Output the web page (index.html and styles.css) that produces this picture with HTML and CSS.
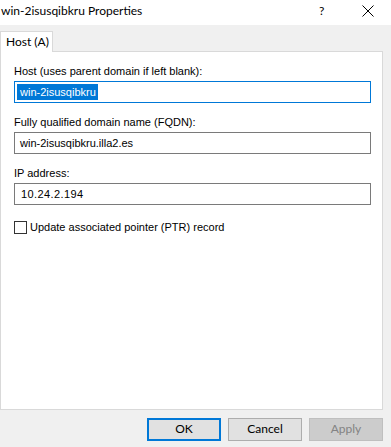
FILE: index.html
```html
<!DOCTYPE html>
<html>
<head>
    <meta charset='utf-8' />
    <title>win-2isusqibkru Properties</title>
    <link rel="stylesheet" href="styles.css">
</head>
<body>
    <div class='dialog'>
        <div class='titlebar'>
            <span class='title'>win-2isusqibkru Properties</span>
            <span class='help'>?</span>
            <span class='close'>
                <svg width='12' height='12' viewBox='0 0 12 12'><path d='M0.5 0.5 L11.5 11.5 M11.5 0.5 L0.5 11.5' stroke='#000' stroke-width='1' fill='none'/></svg>
            </span>
        </div>

        <div class='tabs'>
            <div class='tab'>Host (A)</div>
        </div>

        <div class='panel'>
            <div class='field'>
                <div class='label'>Host (uses parent domain if left blank):</div>
                <div class='input focused'><span class='selected'>win-2isusqibkru</span></div>
            </div>
            <div class='field'>
                <div class='label'>Fully qualified domain name (FQDN):</div>
                <div class='input'>win-2isusqibkru.illa2.es</div>
            </div>
            <div class='field'>
                <div class='label'>IP address:</div>
                <div class='input ip'>10.24.2.194</div>
            </div>
            <label class='check'><span class='box'></span>Update associated pointer (PTR) record</label>
        </div>

        <div class='buttons'>
            <div class='btn default'>OK</div>
            <div class='btn'>Cancel</div>
            <div class='btn disabled'>Apply</div>
        </div>
    </div>
</body>
</html>
```

FILE: styles.css
```css
body {
    margin: 0;
    background: #f0f0f0;
    font-family: 'Lato', 'Noto Sans', sans-serif;
    font-size: 12px;
    color: #000;
}

.dialog {
    width: 391px;
    height: 447px;
}

.titlebar {
    height: 25px;
    background: #fff;
    display: flex;
    align-items: center;
    line-height: 16px;
}

.titlebar .title {
    flex: 1;
    padding: 0 0 0 1px;
    margin-top: -3px;
}

.titlebar .help {
    width: 10px;
    margin: -3px 33px 0 0;
}

.titlebar .close {
    width: 12px;
    height: 12px;
    margin: -4px 17px 0 0;
}

.titlebar .close svg {
    display: block;
}

.tabs {
    padding: 6px 0 0 0;
    display: flex;
}

.tab {
    width: 53px;
    height: 21px;
    box-sizing: border-box;
    border: 1px solid #d9d9d9;
    border-bottom: none;
    background: #fff;
    padding: 0 0 0 5px;
    line-height: 19px;
    margin-bottom: -1px;
    position: relative;
    z-index: 1;
}

.panel {
    width: 383px;
    height: 359px;
    box-sizing: border-box;
    border: 1px solid #d9d9d9;
    background: #fff;
    padding: 11px 0 0 13px;
    font-family: 'Liberation Sans', Arial, sans-serif;
    font-size: 11px;
}

.field {
    margin: 0 0 11px 0;
}

.label {
    line-height: 16px;
    margin: 0 0 2px 0;
}

.input {
    width: 357px;
    height: 22px;
    box-sizing: border-box;
    border: 1px solid #7a7a7a;
    padding: 0 0 0 5px;
    line-height: 20px;
}

.input.focused {
    border-color: #0078d7;
    padding-left: 2px;
}

.input.ip {
    padding-left: 6px;
    letter-spacing: 0.4px;
}

.selected {
    background: #0078d7;
    color: #fff;
    padding: 2px 2px 2px 3px;
}

.check {
    display: flex;
    align-items: center;
    margin: 14px 0 0 0;
    line-height: 16px;
}

.check .box {
    width: 13px;
    height: 13px;
    box-sizing: border-box;
    border: 1px solid #333;
    margin: 0 3px 0 0;
}

.buttons {
    display: flex;
    justify-content: flex-end;
    gap: 7px;
    padding: 8px 8px 0 0;
}

.btn {
    width: 74px;
    height: 23px;
    box-sizing: border-box;
    border: 1px solid #adadad;
    background: #e1e1e1;
    text-align: center;
    line-height: 20px;
}

.btn.default {
    border: 2px solid #0078d7;
    line-height: 18px;
}

.btn.disabled {
    border-color: #bfbfbf;
    background: #cccccc;
    color: #838383;
}
```
